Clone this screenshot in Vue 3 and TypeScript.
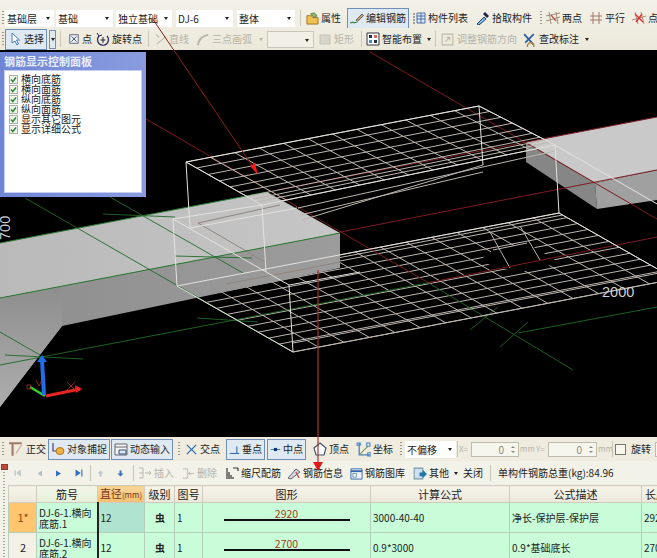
<script setup lang="ts">
type Pt = [number, number]
interface Shape { d: string; s?: string; f?: string; w?: number }
interface Item {
  kind?: 'item' | 'sep' | 'grip' | 'combo' | 'spin' | 'arrow' | 'check'
  m?: number
  w?: number
  icon?: string
  iw?: number
  text?: string
  on?: boolean
  dis?: boolean
  small?: boolean
}

const icons: Record<string, Shape[]> = {
  folder: [{ d: 'M1 4h5l1 2h6v7H1z', f: '#f0c050', s: '#a07020' }, { d: 'M5 2l4-1 3 3-3 2z', f: '#8fb870', s: '#5c8040' }],
  pencil: [{ d: 'M0 12c3-2 4 1 7-1', s: '#3f8a4f', w: 1.4 }, { d: 'M6 9l6-6 1.500 1.500-6 6z', f: '#b9a27a', s: '#6b6250' }],
  list: [{ d: 'M1 3h2M1 6h2M1 9h2M1 12h2', s: '#555' }, { d: 'M5 2h8v10H5z', f: '#dfe9f7', s: '#4a6fa8' }, { d: 'M5 5h8M5 8h8M9 2v10', s: '#4a6fa8' }],
  dropper: [{ d: 'M1 13l7-7 2 2-7 6z', f: '#7fb8e8', s: '#246' }, { d: 'M9 1l4 4-2 2-4-4z', f: '#224' }],
  twoPt: [{ d: 'M3 1l2 12M10 1l2 12M0 10l14-4M0 5l14-3', s: '#a08a78' }, { d: 'M5 4l5 6', s: '#c05a4a', w: 1.400 }],
  parallel: [{ d: 'M4 1v12M10 1v12M1 5h12M1 9h12', s: '#a07868' }],
  ptCross: [{ d: 'M3 1l3 12M9 1l3 12M0 9l14-4', s: '#b08a80' }, { d: 'M3 3l8 8M10 3l-6 8', s: '#d33', w: 1.400 }],
  cursor: [{ d: 'M4 1v10l3-2 2 4 1.500-1-2-4h3z', f: '#fff', s: '#4a7ac0' }],
  ptBox: [{ d: 'M2 2h10v10H2z', f: '#e8eef8', s: '#556' }, { d: 'M4 4l6 6M10 4l-6 6', s: '#345' }],
  rotate: [{ d: 'M3 4a5.500 5.500 0 1 0 8 0', s: '#225', w: 1.200 }, { d: 'M7 5v6M4.500 8h5', s: '#224' }, { d: 'M1 1l2 3 3-1', s: '#225' }],
  line: [{ d: 'M1 2l4 3M2 13L13 4', s: '#bdbab0', w: 1.300 }],
  arc: [{ d: 'M1 13C2 7 6 3 12 2', s: '#b5b2a5', w: 2 }],
  rect: [{ d: 'M2 3h10v9H2z', f: '#d8d6ca', s: '#c4c2b8' }],
  smart: [{ d: 'M1 1h12v12H1z', f: '#fff', s: '#334' }, { d: 'M3 3h3v3H3zM8 8h3v3H8z', f: '#234' }, { d: 'M8 3h3v3H8z', f: '#d66' }, { d: 'M3 8h3v3H3z', f: '#48c' }],
  adjust: [{ d: 'M2 2h10v10H2z', s: '#bbb8ac' }, { d: 'M5 9l4-4M9 5H6M9 5v3', s: '#bbb8ac' }],
  modify: [{ d: 'M2 2l9 10M11 2L3 10', s: '#2a5ea0', w: 1.600 }, { d: 'M8 10a3 3 0 1 0 .1 0', s: '#b5803a', w: 1.300 }],
  ortho: [{ d: 'M1 2h11M4 2v11', s: '#a07868', w: 1.800 }, { d: 'M12 3L7 11', s: '#c8a898' }],
  snap: [{ d: 'M2 1v8h11', s: '#446', w: 1.200 }, { d: 'M5 9a4 3.500 0 1 0 8 0 4 3.500 0 1 0-8 0', f: '#eeb040', s: '#b07a20' }],
  dyn: [{ d: 'M1 2h12v11H1z', f: '#f4f4f0', s: '#667' }, { d: 'M1 5h12', s: '#667' }, { d: 'M5 8h7v4H5z', f: '#dfe6f0', s: '#357' }],
  cross: [{ d: 'M2 2l10 10M12 2L2 12', s: '#2f6fb0', w: 1.400 }],
  perp: [{ d: 'M1 12h12M10 12V3', s: '#245a9a', w: 1.200 }],
  mid: [{ d: 'M1 7h12', s: '#245a9a' }, { d: 'M5 5h4v4H5z', f: '#123a70' }],
  pent: [{ d: 'M7 1l6 5-2 7H3L1 6z', f: '#fff', s: '#456', w: 1.200 }],
  coord: [{ d: 'M3 1v11h10', s: '#4a80c0', w: 1.200 }, { d: 'M3 12l8-8', s: '#7a9a60' }, { d: 'M1 1h3v2H1zM10 1h3v3h-3zM11 10h3v3h-3z', s: '#4a80c0' }],
  first: [{ d: 'M2 2v10', s: '#b5bdc8', w: 2 }, { d: 'M12 1L4 7l8 6z', f: '#c0c7d0' }],
  prev: [{ d: 'M12 1L3 7l9 6z', f: '#b5bdc8' }],
  next: [{ d: 'M2 1l10 6-10 6z', f: '#2d6fc4' }],
  last: [{ d: 'M1 1l9 6-9 6z', f: '#2d6fc4' }, { d: 'M12 1v12', s: '#2d6fc4', w: 2 }],
  up: [{ d: 'M7 1l6 6H9v6H5V7H1z', f: '#bfc5cc' }],
  down: [{ d: 'M5 1h4v6h4l-6 6-6-6h4z', f: '#3b6fc0' }],
  insert: [{ d: 'M1 2h4M1 12h4M1 7h4M5 2v10', s: '#bbb8ac' }, { d: 'M7 7h6M11 5l2 2-2 2', s: '#bbb8ac' }],
  remove: [{ d: 'M1 2h5M1 12h5M6 2v10', s: '#bbb8ac' }, { d: 'M7 7h6M9 5L7 7l2 2', s: '#bbb8ac' }],
  scale: [{ d: 'M2 2v11M4 6v7M6 9v4M8 11v2', s: '#333', w: 1.200 }, { d: 'M8 2h5M13 2v3', s: '#333', w: 1.200 }],
  info: [{ d: 'M1 12L9 3l4 3-9 7z', f: '#d0d4d8', s: '#667' }, { d: 'M9 6l3 6', s: '#b55', w: 1.400 }],
  lib: [{ d: 'M1 2h12v11H1z', f: '#eef3fa', s: '#36a' }, { d: 'M1 4.500h12', s: '#36a', w: 2 }, { d: 'M3 7h4v4H3z', s: '#79a' }],
  other: [{ d: 'M2 2h8v10H2z', f: '#cfe0f0', s: '#79a' }, { d: 'M7 6h3V3.500l4 4-4 4V9.500H7z', f: '#27a' }]
}

const row1: Item[] = [
  { kind: 'grip', m: 2 },
  { kind: 'combo', m: 1, w: 49, text: '基础层' },
  { kind: 'combo', m: 2, w: 57, text: '基础' },
  { kind: 'combo', m: 3, w: 56, text: '独立基础' },
  { kind: 'combo', m: 4, w: 57, text: 'DJ-6' },
  { kind: 'combo', m: 4, w: 58, text: '整体' },
  { kind: 'sep', m: 5 },
  { m: 5, icon: 'folder', iw: 13, text: '属性' },
  { m: 6, icon: 'pencil', text: '编辑钢筋', on: true },
  { m: 3, icon: 'list', text: '构件列表' },
  { m: 8, icon: 'dropper', text: '拾取构件' },
  { kind: 'grip', m: 8 },
  { m: 4, icon: 'twoPt', text: '两点' },
  { m: 7, icon: 'parallel', text: '平行' },
  { m: 7, icon: 'ptCross', text: '点:' }
]

const row2: Item[] = [
  { kind: 'grip', m: 2 },
  { m: 1, icon: 'cursor', text: '选择', on: true },
  { kind: 'arrow', m: 2, on: true },
  { kind: 'sep', m: 4 },
  { m: 7, icon: 'ptBox', iw: 12, text: '点' },
  { m: 4, icon: 'rotate', text: '旋转点' },
  { kind: 'sep', m: 6 },
  { m: 6, icon: 'line', iw: 12, text: '直线', dis: true },
  { m: 8, icon: 'arc', iw: 13, text: '三点画弧', dis: true },
  { kind: 'arrow', m: 5, dis: true },
  { kind: 'combo', m: 3, w: 47, dis: true },
  { m: 4, icon: 'rect', text: '矩形', dis: true },
  { kind: 'sep', m: 7 },
  { m: 4, icon: 'smart', text: '智能布置' },
  { kind: 'arrow', m: 3 },
  { kind: 'sep', m: 3 },
  { m: 4, icon: 'adjust', iw: 15, text: '调整钢筋方向', dis: true },
  { m: 5, icon: 'modify', iw: 15, text: '查改标注' },
  { kind: 'arrow', m: 4 }
]

const statusRow: Item[] = [
  { kind: 'grip', m: 2 },
  { m: 4, icon: 'ortho', iw: 16, text: '正交' },
  { m: 2, icon: 'snap', text: '对象捕捉', on: true },
  { m: 1, icon: 'dyn', text: '动态输入', on: true },
  { kind: 'grip', m: 5 },
  { m: 5, icon: 'cross', iw: 13, text: '交点' },
  { m: 6, icon: 'perp', iw: 11, text: '垂点', on: true },
  { m: 2, icon: 'mid', iw: 11, text: '中点', on: true },
  { m: 7, icon: 'pent', text: '顶点' },
  { m: 7, icon: 'coord', iw: 15, text: '坐标' },
  { kind: 'grip', m: 7 },
  { kind: 'combo', m: 3, w: 51, text: '不偏移' },
  { kind: 'sep', m: 1 },
  { m: 1, w: 12, text: 'X=', dis: true, small: true },
  { kind: 'spin', w: 48, text: '0' },
  { m: 1, w: 11, text: 'mm', dis: true, small: true },
  { m: 5, w: 12, text: 'Y=', dis: true, small: true },
  { kind: 'spin', w: 49, text: '0' },
  { m: 1, w: 11, text: 'mm', dis: true, small: true },
  { kind: 'sep', m: 3 },
  { kind: 'check', m: 2, w: 11 },
  { m: 5, text: '旋转' },
  { kind: 'spin', m: 4, w: 40 }
]

const gridRow: Item[] = [
  { m: 6, icon: 'first', iw: 8 },
  { m: 14, icon: 'prev', iw: 7 },
  { m: 12, icon: 'next', iw: 7 },
  { m: 13, icon: 'last', iw: 8 },
  { kind: 'sep', m: 7 },
  { m: 6, icon: 'up', iw: 7 },
  { m: 13, icon: 'down', iw: 7 },
  { kind: 'sep', m: 9 },
  { m: 4, icon: 'insert', text: '插入', dis: true },
  { m: 8, icon: 'remove', iw: 13, text: '删除', dis: true },
  { m: 8, icon: 'scale', text: '缩尺配筋' },
  { m: 6, icon: 'info', text: '钢筋信息' },
  { m: 7, icon: 'lib', iw: 13, text: '钢筋图库' },
  { m: 7, icon: 'other', iw: 15, text: '其他' },
  { kind: 'arrow', m: 3 },
  { m: 4, text: '关闭' },
  { kind: 'sep', m: 7 },
  { m: 7, text: '单构件钢筋总重(kg):84.96' }
]

const panelItems = ['横向底筋', '横向面筋', '纵向底筋', '纵向面筋', '显示其它图元', '显示详细公式']

const rows = [
  { head: '1*', no: 'DJ-6-1.横向底筋.1', dia: '12', grade: '虫', fig: '1', len: '2920', formula: '3000-40-40', desc: '净长-保护层-保护层', total: '2920' },
  { head: '2', no: 'DJ-6-1.横向底筋.2', dia: '12', grade: '虫', fig: '1', len: '2700', formula: '0.9*3000', desc: '0.9*基础底长', total: '2700' },
  { head: '3', no: 'DJ-6-1.横向底筋.3', dia: '12', grade: '虫', fig: '1', len: '1850', formula: '3000-40-40', desc: '净长-保护层-保护层', total: '2920' }
]

function mix(a: Pt, b: Pt, t: number): Pt {
  return [a[0] + (b[0] - a[0]) * t, a[1] + (b[1] - a[1]) * t]
}

// rebar mesh on a parallelogram a-b (back) d-c (front)
function mesh(a: Pt, b: Pt, c: Pt, d: Pt, rowT: number[], colCount: number): string {
  let out = ''
  const seg = (p: Pt, q: Pt) => `M${p[0].toFixed(1)} ${p[1].toFixed(1)}L${q[0].toFixed(1)} ${q[1].toFixed(1)}`
  for (const t of rowT) out += seg(mix(a, d, t), mix(b, c, t))
  for (let i = 0; i <= colCount; i++) {
    const t = i / colCount
    out += seg(mix(a, b, t), mix(d, c, t))
  }
  return out
}

const upperMesh = mesh([186, 162], [479, 106], [555, 145], [262, 205], [0, 0.14, 0.29, 0.44, 0.58, 0.7, 0.8, 0.87, 0.93, 1], 12)
const lowerMesh = mesh([177, 286], [559, 213], [675, 279], [293, 352], [0, 0.03, 0.07, 0.16, 0.25, 0.34, 0.43, 0.52, 0.61, 0.7, 0.79, 0.88, 1], 15)
</script>

<template>
  <div class="app">
    <!-- Top toolbars -->
    <header class="top">
      <div v-for="(row, r) in [row1, row2]" :key="r" class="bar" :class="r === 0 ? 'bar-a' : 'bar-b'">
        <template v-for="(it, i) in row" :key="i">
          <div
            :class="[it.kind || 'item', { on: it.on, dis: it.dis, small: it.small }]"
            :style="{ marginLeft: (it.m || 0) + 'px', width: it.w ? it.w + 'px' : undefined }"
          >
            <svg v-if="it.icon" :width="it.iw || 14" :height="it.iw || 14" viewBox="0 0 14 14" class="ico">
              <path v-for="(p, k) in icons[it.icon]" :key="k" :d="p.d" :fill="p.f || 'none'" :stroke="p.s || 'none'" :stroke-width="p.w || 1" />
            </svg>
            <span v-if="it.text" class="label">{{ it.text }}</span>
            <i v-if="it.kind === 'combo' || it.kind === 'arrow'" class="caret"></i>
          </div>
        </template>
      </div>
    </header>

    <!-- 3D view -->
    <main class="view">
      <svg class="scene" width="657" height="387" viewBox="0 50 657 387">
        <defs>
          <linearGradient id="beamTop" x1="0" y1="0" x2="1" y2="0">
            <stop offset="0" stop-color="#b9b9b9" />
            <stop offset="1" stop-color="#c6c6c6" />
          </linearGradient>
          <linearGradient id="beamFront" x1="0" y1="0" x2="1" y2="0">
            <stop offset="0" stop-color="#8e8e8e" />
            <stop offset="1" stop-color="#9c9c9c" />
          </linearGradient>
          <linearGradient id="slab" x1="0" y1="0" x2="0" y2="1">
            <stop offset="0" stop-color="#8e8e8e" />
            <stop offset="1" stop-color="#adadad" />
          </linearGradient>
        </defs>

        <path class="rebar" :d="lowerMesh" />
        <path d="M490 265L480 260L493 250L527 243L560 263L520 272Z" fill="#000" />
        <path class="rebar" d="M493 250L527 243M510 268L490 232M540 260L520 226" />

        <polygon points="0,243 267,192 340,233 0,298" fill="url(#beamTop)" />
        <polygon points="0,298 340,233 340,268 62,326 0,407" fill="url(#beamFront)" />
        <polygon points="0,298 62,286 62,326 0,407" fill="url(#slab)" />
        <polygon points="526,142 657,117 657,170 595,183" fill="#c9c9c9" />
        <polygon points="526,142 595,183 597,209 526,162" fill="#868686" />
        <polygon points="595,183 657,170 657,200 597,209" fill="#a0a0a0" />

        <path class="brown" d="M198 223L280 205M198 223L265 262M226 284L300 270M300 270L340 262" />

        <path class="green" d="M0 243L267 192M0 298L340 233" />
        <path class="green thin" d="M0 365L427 283M518 333L657 307M25 198L293 352M110 197L243 273M0 332L40 355M427 282L573 370" />
        <path class="green thin" d="M103 214L175 217M175 256L252 258M197 318L258 322M5 355L83 359M470 330L498 307M500 347L528 322" />

        <path class="axis" d="M146 119L427 282M370 52L650 215M650 215L657 219M340 232L657 170M277 190L657 117M427 283L657 237" />

        <path class="rebar" :d="upperMesh" />
        <path class="rebar" d="M298 208L555 151M300 215L483 172M302 220L483 165" />

        <g class="wire">
          <path d="M186 162L479 106L555 145L262 205Z" />
          <path d="M186 162L190 228M479 106L483 165M555 145L559 213M262 205L266 272" />
          <path d="M190 228L297 208M173 219L262 205M177 286L559 213M559 213L675 279" />
          <path d="M173 219L177 286M173 219L289 285L293 352M177 286L293 352M555 145L671 212M289 285L360 272" />
        </g>
        <path class="rebar" d="M293 352L675 279M293 343L675 270" />

        <text class="dim" x="602" y="297">2000</text>
        <text class="dim" transform="translate(10 240) rotate(-90)">700</text>

        <!-- UCS widget -->
        <path d="M46 396L80 389" stroke="#e8251f" stroke-width="3" />
        <path d="M75 385L82 389L76 393Z" fill="#e8251f" />
        <path d="M45 396L30 387" stroke="#30d030" stroke-width="2.500" />
        <path d="M44 395L42 360" stroke="#1f6fe8" stroke-width="4" />
        <path d="M37 362L42 355L47 362Z" fill="#1f6fe8" />
        <path d="M67 382L75 390M75 382L67 390M36 380L39 386M42 380L39 386M27 385h4v4h-4z" stroke="#b03030" fill="none" stroke-width="0.800" />
      </svg>

      <!-- Floating control panel -->
      <section class="panel">
        <div class="panel-title">钢筋显示控制面板</div>
        <ul class="panel-body">
          <li v-for="name in panelItems" :key="name">
            <svg width="9" height="9" viewBox="0 0 9 9" class="tick">
              <rect x="0.500" y="0.500" width="8" height="8" fill="#eef2ea" stroke="#a9b5a8" />
              <path d="M2 4.500L3.800 6.500L7 2.500" fill="none" stroke="#2c8a3a" stroke-width="1.500" />
            </svg>
            <span>{{ name }}</span>
          </li>
        </ul>
      </section>
    </main>

    <!-- Snap toolbar -->
    <div class="bar bar-status">
      <template v-for="(it, i) in statusRow" :key="i">
        <div
          :class="[it.kind || 'item', { on: it.on, dis: it.dis, small: it.small }]"
          :style="{ marginLeft: (it.m || 0) + 'px', width: it.w ? it.w + 'px' : undefined }"
        >
          <svg v-if="it.icon" :width="it.iw || 14" :height="it.iw || 14" viewBox="0 0 14 14" class="ico">
            <path v-for="(p, k) in icons[it.icon]" :key="k" :d="p.d" :fill="p.f || 'none'" :stroke="p.s || 'none'" :stroke-width="p.w || 1" />
          </svg>
          <span v-if="it.kind === 'spin'" class="spin-val">{{ it.text }}</span>
          <span v-else-if="it.text" class="label">{{ it.text }}</span>
          <i v-if="it.kind === 'combo'" class="caret"></i>
          <span v-if="it.kind === 'spin'" class="spin-btn"><i></i><i></i></span>
        </div>
      </template>
    </div>

    <!-- Rebar editor dock -->
    <section class="dock">
      <aside class="dock-strip">
        <span class="dock-close"></span>
        <span class="dock-dots"></span>
      </aside>
      <div class="dock-main">
        <div class="bar bar-grid">
          <template v-for="(it, i) in gridRow" :key="i">
            <div
              :class="[it.kind || 'item', { on: it.on, dis: it.dis }]"
              :style="{ marginLeft: (it.m || 0) + 'px' }"
            >
              <svg v-if="it.icon" :width="it.iw || 14" :height="it.iw || 14" viewBox="0 0 14 14" class="ico">
                <path v-for="(p, k) in icons[it.icon]" :key="k" :d="p.d" :fill="p.f || 'none'" :stroke="p.s || 'none'" :stroke-width="p.w || 1" />
              </svg>
              <span v-if="it.text" class="label">{{ it.text }}</span>
              <i v-if="it.kind === 'arrow'" class="caret"></i>
            </div>
          </template>
        </div>

        <table class="grid">
          <colgroup>
            <col class="c-head" /><col class="c-no" /><col class="c-dia" /><col class="c-grade" /><col class="c-fig" />
            <col class="c-shape" /><col class="c-formula" /><col class="c-desc" /><col class="c-total" />
          </colgroup>
          <thead>
            <tr>
              <th></th>
              <th class="th-soft">筋号</th>
              <th class="th-active">直径<small>(mm)</small></th>
              <th>级别</th>
              <th>图号</th>
              <th>图形</th>
              <th>计算公式</th>
              <th>公式描述</th>
              <th class="th-left">长度</th>
            </tr>
          </thead>
          <tbody>
            <tr v-for="(row, i) in rows" :key="row.head">
              <td class="head" :class="{ current: i === 0 }">{{ row.head }}</td>
              <td class="no">{{ row.no }}</td>
              <td class="dia" :class="{ picked: i === 0 }">{{ row.dia }}</td>
              <td class="grade">{{ row.grade }}</td>
              <td>{{ row.fig }}</td>
              <td class="shape">
                <div class="shape-len">{{ row.len }}</div>
                <div class="shape-bar"></div>
              </td>
              <td>{{ row.formula }}</td>
              <td>{{ row.desc }}</td>
              <td>{{ row.total }}</td>
            </tr>
          </tbody>
        </table>
      </div>
    </section>

    <!-- Annotation arrows drawn over the whole window -->
    <svg class="notes" width="657" height="558" viewBox="0 0 657 558">
      <path d="M152 18L253 167" stroke="#8c2020" fill="none" />
      <path d="M250 166L255 163L258 175Z" fill="#f01818" />
      <path d="M318 270V464" stroke="#a83030" stroke-width="1.200" fill="none" />
      <path d="M313 462H323L318 471Z" fill="#e01818" />
    </svg>
  </div>
</template>

<style scoped>
.app {
  position: relative;
  display: flex;
  flex-direction: column;
  width: 657px;
  height: 558px;
  overflow: hidden;
  background: #efecdf;
  color: #222;
  font-family: "Noto Sans CJK SC", "Liberation Sans", sans-serif;
  font-size: 10px;
}

.top {
  padding-top: 8px;
  background: linear-gradient(#f3f1e8, #ece9db);
  flex: none;
}

.bar {
  display: flex;
  align-items: center;
  white-space: nowrap;
  overflow: hidden;
  flex: none;
}
.bar-a { height: 20px; }
.bar-b { height: 22px; }
.bar-status { height: 24px; background: #efecdf; }
.bar-grid { height: 24px; }

.item {
  display: flex;
  align-items: center;
  gap: 2px;
  flex: none;
  height: 19px;
  line-height: 12px;
}
.item.on {
  padding: 0 2px;
  border: 1px solid #6f8fb8;
  background: #dfe9f2;
  height: 19px;
}
.item.dis { color: #b5b3a8; }
.item.small { font-size: 8px; }

.ico { display: block; flex: none; }

.sep {
  width: 1px;
  height: 16px;
  background: #c9c6b6;
  flex: none;
}
.grip {
  width: 2px;
  height: 15px;
  flex: none;
  background: repeating-linear-gradient(#9a988c 0 1px, transparent 1px 3px);
}

.combo {
  position: relative;
  display: flex;
  align-items: center;
  flex: none;
  height: 17px;
  padding-left: 2px;
  background: #fff;
  box-sizing: border-box;
}
.combo.dis {
  background: #f2f0e6;
  border: 1px solid #c8c6b8;
}
.combo .caret {
  position: absolute;
  right: 4px;
  top: 7px;
}

.caret {
  display: block;
  width: 0;
  height: 0;
  border-left: 2.5px solid transparent;
  border-right: 2.5px solid transparent;
  border-top: 3px solid #222;
}
.arrow {
  display: flex;
  align-items: center;
  justify-content: center;
  flex: none;
  width: 7px;
  height: 19px;
  box-sizing: border-box;
}
.arrow.on {
  border: 1px solid #6f8fb8;
  background: #dfe9f2;
}
.arrow.dis .caret { border-top-color: #b5b3a8; }

.spin {
  display: flex;
  align-items: center;
  justify-content: flex-end;
  flex: none;
  box-sizing: border-box;
  height: 15px;
  padding-right: 1px;
  background: #f6f5ee;
  border: 1px solid #bdbcae;
  color: #8a8a80;
}
.spin-val { margin-right: 7px; }
.spin-btn {
  display: flex;
  flex-direction: column;
  gap: 3px;
  margin-right: 2px;
}
.spin-btn i {
  display: block;
  width: 0;
  border-left: 2px solid transparent;
  border-right: 2px solid transparent;
  border-bottom: 2px solid #8a8a80;
}
.spin-btn i + i {
  border-bottom: 0;
  border-top: 2px solid #8a8a80;
}

.check {
  flex: none;
  height: 11px;
  box-sizing: border-box;
  background: #f6f5ee;
  border: 1px solid #77776c;
}

/* 3D view */
.view {
  position: relative;
  height: 387px;
  flex: none;
  background: #000;
}
.scene { display: block; }
.rebar {
  fill: none;
  stroke: #bcb6b0;
  stroke-width: 1;
}
.brown {
  fill: none;
  stroke: #8f857f;
  stroke-width: 1;
}
.green {
  fill: none;
  stroke: #2a7a32;
  stroke-width: 1;
}
.green.thin { stroke: #1f6a28; stroke-width: 0.9; }
.axis {
  fill: none;
  stroke: #7c1c20;
  stroke-width: 1;
}
.wire path {
  fill: none;
  stroke: #e4e2de;
  stroke-width: 1;
}
.dim {
  fill: #cfcfcf;
  font-family: "Liberation Sans", sans-serif;
  font-size: 14.5px;
}

.panel {
  position: absolute;
  left: 0;
  top: 2px;
  width: 146px;
  height: 145px;
  box-sizing: border-box;
  padding: 0 4px 4px;
  background: linear-gradient(90deg, #6f86d6, #8a9cdf);
  display: flex;
  flex-direction: column;
}
.panel-title {
  height: 18px;
  line-height: 18px;
  padding-left: 0;
  color: #e9edfb;
  font-size: 11px;
  font-weight: 700;
  flex: none;
}
.panel-body {
  flex: 1;
  list-style: none;
  margin: 0;
  padding: 3px 0 0 4px;
  background: #fff;
  border: 1px solid #c6cdef;
  color: #222;
}
.panel-body li {
  display: flex;
  align-items: center;
  gap: 3px;
  height: 10px;
  line-height: 10px;
}
.tick { flex: none; }

/* Dock */
.dock {
  display: flex;
  flex: 1;
  min-height: 0;
  background: #f3f2e9;
}
.dock-strip {
  flex: none;
  width: 8px;
  display: flex;
  flex-direction: column;
  align-items: center;
  padding-top: 3px;
  gap: 2px;
}
.dock-close {
  width: 7px;
  height: 6px;
  background: #c04a3a;
  border: 1px solid #8a3a30;
  box-sizing: border-box;
}
.dock-dots {
  flex: 1;
  width: 2px;
  background: repeating-linear-gradient(#a8a698 0 1px, transparent 1px 3px);
}
.dock-main {
  flex: 1;
  min-width: 0;
}

.grid {
  table-layout: fixed;
  border-collapse: collapse;
  width: 690px;
  background: #c9fcd8;
  font-size: 10px;
}
.c-head { width: 28px; }
.c-no { width: 61px; }
.c-dia { width: 47px; }
.c-grade { width: 30px; }
.c-fig { width: 28px; }
.c-shape { width: 168px; }
.c-formula { width: 139px; }
.c-desc { width: 132px; }
.c-total { width: 57px; }

.grid th {
  height: 16px;
  padding: 0;
  font-size: 11px;
  font-weight: 400;
  line-height: 12px;
  background: linear-gradient(#f6f4ea, #ebe8da);
  border: 1px solid #cfccbd;
  overflow: hidden;
  white-space: nowrap;
}
.grid th small { font-size: 8px; }
.grid .th-soft { background: linear-gradient(#f4f6e8, #e4efd8); }
.grid .th-active {
  color: #7a3010;
  background: linear-gradient(#f8d89c, #f2bf70);
}
.grid .th-left { text-align: left; padding-left: 3px; }

.grid td {
  height: 24px;
  padding: 0 1px 0 2px;
  line-height: 11px;
  border: 1px solid #b6cdb9;
  overflow: hidden;
  white-space: nowrap;
}
.grid td.head {
  text-align: center;
  background: #f3f1e6;
  font-size: 11px;
}
.grid td.current {
  background: #ffc56f;
  color: #8a4a10;
}
.grid td.no { white-space: normal; word-break: normal; }
.grid td.dia { border-left: 2px solid #222; }
.grid td.picked { background: #b0e4d0; }
.grid td.grade { text-align: center; font-weight: 700; font-size: 10px; }
.grid td.shape { vertical-align: top; padding: 5px 0 0; text-align: center; }
.shape-len {
  color: #a0401c;
  line-height: 11px;
  font-size: 10.5px;
}
.shape-bar {
  width: 126px;
  height: 2px;
  margin: 0 auto;
  background: #111;
}

.notes {
  position: absolute;
  left: 0;
  top: 0;
  pointer-events: none;
}
</style>
